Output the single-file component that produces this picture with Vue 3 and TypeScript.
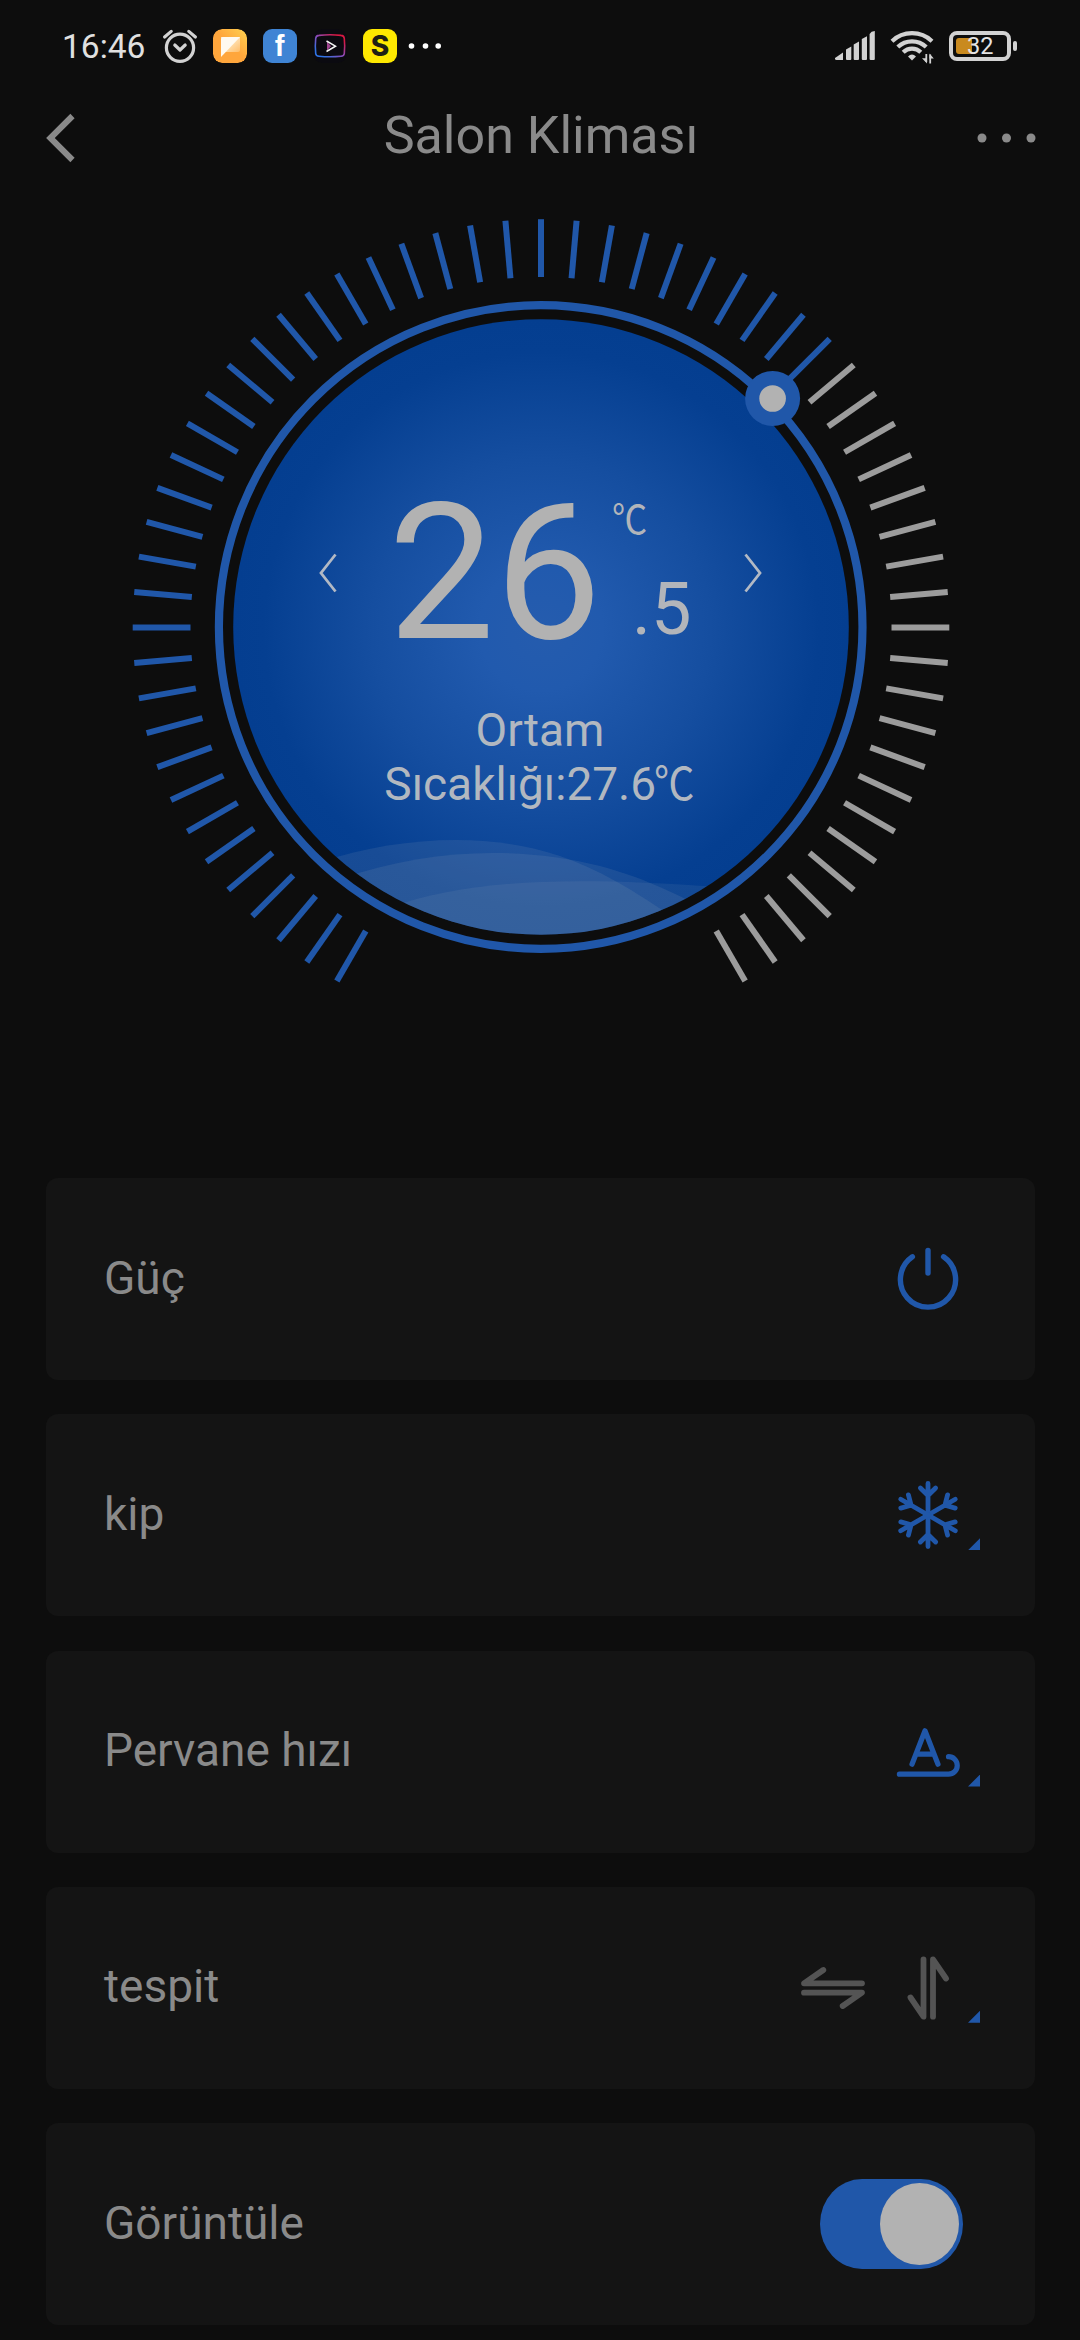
<script setup lang="ts">
import { computed, ref } from 'vue'

interface Tick {
  angle: number
  active: boolean
}

const whole = ref(26)
const fraction = ref(5)
const ambient = ref('27.6')
const knobAngle = 45
const displayOn = ref(true)

const ticks = computed<Tick[]>(() =>
  Array.from({ length: 61 }, (_, i) => {
    const angle = -150 + i * 5
    return { angle, active: angle <= knobAngle }
  }),
)

const arms = [0, 60, 120, 180, 240, 300]

type RowKind = 'power' | 'mode' | 'fan' | 'swing' | 'display'
interface Row {
  kind: RowKind
  label: string
  menu: boolean
}

const rows: Row[] = [
  { kind: 'power', label: 'Güç', menu: false },
  { kind: 'mode', label: 'kip', menu: true },
  { kind: 'fan', label: 'Pervane hızı', menu: true },
  { kind: 'swing', label: 'tespit', menu: true },
  { kind: 'display', label: 'Görüntüle', menu: false },
]
</script>

<template>
  <main class="screen">
    <div class="status">
      <span class="time">16:46</span>
      <svg class="alarm" width="36" height="36" viewBox="0 0 36 36" fill="none" stroke="#d2d2d2" stroke-width="3.2" stroke-linecap="round">
        <circle cx="18" cy="19.7" r="13.6" />
        <path d="M2.6 9 L9.2 3.4 M33.4 9 L26.8 3.4" />
        <path d="M12.8 17 L18 22 L23.2 17" stroke-linejoin="round" />
      </svg>
      <svg class="app" width="34" height="34" viewBox="0 0 34 34">
        <defs>
          <linearGradient id="note" x1="1" y1="0" x2="0.2" y2="0.8">
            <stop offset="0" stop-color="#ffd24f" />
            <stop offset="0.6" stop-color="#ffa63c" />
          </linearGradient>
          <linearGradient id="fold" x1="0" y1="0" x2="1" y2="1">
            <stop offset="0.3" stop-color="#ffecc8" />
            <stop offset="1" stop-color="#ffbd68" />
          </linearGradient>
        </defs>
        <rect width="34" height="34" rx="9" fill="url(#note)" />
        <path d="M8 8 H27 V21 Q27 23 25 23 H12 Z" fill="url(#fold)" />
        <path d="M8 28 V10 Q8 8 10 8 H27 Z" fill="#fffaf0" />
      </svg>
      <span class="app facebook">f</span>
      <svg class="app" width="34" height="34" viewBox="0 0 34 34" fill="none">
        <defs>
          <linearGradient id="neon" x1="0" y1="1" x2="1" y2="0">
            <stop offset="0.15" stop-color="#2f74e6" />
            <stop offset="0.5" stop-color="#8b4bb8" />
            <stop offset="0.85" stop-color="#d81842" />
          </linearGradient>
        </defs>
        <rect width="34" height="34" rx="9" fill="#0b0a10" />
        <path d="M6 6.4 Q17 5.2 28 6.4 Q31 6.6 31.3 9.5 Q32.1 17 31.3 24.5 Q31 27 28 27.3 Q17 28.3 6 27.3 Q3 27 2.7 24.5 Q1.9 17 2.7 9.5 Q3 6.6 6 6.4 Z" stroke="url(#neon)" stroke-width="1.6" />
        <path d="M14 12.5 V21.5 L18 17.3 Z" fill="#a04590" />
        <path d="M13.5 12 L22.5 17.2 L13.5 22.5" stroke="#f4f4f4" stroke-width="1.5" />
      </svg>
      <span class="app sapp">S</span>
      <svg width="34" height="8" viewBox="0 0 34 8" class="more-apps" fill="#fff">
        <circle cx="4.5" cy="4" r="2.8" />
        <circle cx="18.5" cy="4" r="2.8" />
        <circle cx="31.2" cy="4" r="2.8" />
      </svg>

      <svg class="signal" width="41" height="30" viewBox="0 0 41 30" fill="#d2d2d2">
        <path d="M1 27 L9 21.5 V29 H2.5 Q1 29 1 27.5 Z" />
        <path d="M12 18.5 L17.3 15.5 V28 Q17.3 29 16.3 29 H13 Q12 29 12 28 Z" />
        <path d="M19.7 13.5 L25 10.5 V28 Q25 29 24 29 H20.7 Q19.7 29 19.7 28 Z" />
        <path d="M27.8 8 L33 5.2 V28 Q33 29 32 29 H28.8 Q27.8 29 27.8 28 Z" />
        <path d="M35.6 3 L37.6 0.8 L40.8 0 V28 Q40.8 29 39.8 29 H36.6 Q35.6 29 35.6 28 Z" />
      </svg>
      <svg class="wifi" width="44" height="34" viewBox="0 0 44 34" fill="none" stroke="#d2d2d2" stroke-width="4.2">
        <path d="M2 11.2 A29 29 0 0 1 42 11.2" />
        <path d="M7.8 17 A20.5 20.5 0 0 1 36.2 17" />
        <path d="M13.2 22.3 A12.5 12.5 0 0 1 30.8 22.3" />
        <path d="M18 26.5 Q22 22.4 26 26.5 L22 30.5 Z" fill="#d2d2d2" stroke="none" />
        <path d="M36.3 24 V32 M40.2 33.5 V24.5" stroke-width="1.8" />
        <path d="M32 28.2 H37 V33.6 Z M39.5 23.4 L43.8 28.6 H39.5 Z" fill="#d2d2d2" stroke="none" />
      </svg>
      <div class="battery">
        <div class="battery-body">
          <span class="battery-fill"></span>
          <span class="battery-text">32</span>
        </div>
        <span class="battery-cap"></span>
      </div>
    </div>

    <header class="header">
      <svg width="30" height="50" viewBox="0 0 30 50" fill="none" stroke="#8a8a8a" stroke-width="6">
        <path d="M26.5 3 L4.4 25 L26.5 47" />
      </svg>
      <h1>Salon Kliması</h1>
      <svg width="60" height="12" viewBox="0 0 60 12" fill="#8a8a8a">
        <circle cx="6" cy="6" r="4.5" />
        <circle cx="30.500" cy="6" r="4.5" />
        <circle cx="55" cy="6" r="4.5" />
      </svg>
    </header>

    <section class="dial">
      <svg class="dial-art" width="1080" height="994" viewBox="0 184 1080 994">
        <defs>
          <radialGradient id="disc" gradientUnits="userSpaceOnUse" cx="541" cy="629" r="308">
            <stop offset="0" stop-color="#255cae" />
            <stop offset="0.2" stop-color="#215aae" />
            <stop offset="0.55" stop-color="#154ea0" />
            <stop offset="0.9" stop-color="#053f91" />
            <stop offset="1" stop-color="#043e90" />
          </radialGradient>
          <clipPath id="discClip"><circle cx="541" cy="627" r="307.8" /></clipPath>
        </defs>
        <line
          v-for="t in ticks"
          :key="t.angle"
          x1="541"
          y1="219.2"
          x2="541"
          y2="277"
          stroke-width="6"
          :stroke="t.active ? '#2057a9' : '#9c9c9c'"
          :transform="`rotate(${t.angle} 541 627.5)`"
        />
        <circle cx="541" cy="627" r="307.8" fill="url(#disc)" />
        <g clip-path="url(#discClip)" fill="#c8c8c8">
          <path fill-opacity="0.1" d="M320 862 C400 836 490 832 560 856 C600 870 630 888 680 922 V950 H320 Z" />
          <path fill-opacity="0.1" d="M340 879 C430 848 520 846 600 866 C640 877 670 890 710 912 V950 H340 Z" />
          <path fill-opacity="0.08" d="M390 907 C470 880 560 876 720 887 V950 H390 Z" />
        </g>
        <circle cx="540.7" cy="627" r="321.8" fill="none" stroke="#2057a9" stroke-width="8.2" />
        <circle cx="772.6" cy="398.5" r="27.5" fill="#2057a9" />
        <circle cx="772.6" cy="398.5" r="13.3" fill="#b2b2b2" />
      </svg>

      <div class="readout">
        <div class="setpoint">
          <svg width="18" height="40" viewBox="0 0 18 40" fill="none" stroke="#b2b9c4" stroke-width="2.8">
            <path d="M16.5 1.5 L2 20 L16.5 38.5" />
          </svg>
          <span class="whole">{{ whole }}</span>
          <div class="side">
            <span class="unit"><span class="celsius">℃</span></span>
            <span class="fraction">.{{ fraction }}</span>
          </div>
          <svg width="18" height="40" viewBox="0 0 18 40" fill="none" stroke="#b2b9c4" stroke-width="2.8">
            <path d="M1.5 1.5 L16 20 L1.5 38.5" />
          </svg>
        </div>
        <p class="ambient">Ortam<br />Sıcaklığı:{{ ambient }}<span class="celsius">℃</span></p>
      </div>
    </section>

    <section class="list">
      <div v-for="row in rows" :key="row.kind" class="card">
        <span class="label">{{ row.label }}</span>

        <svg v-if="row.kind === 'power'" class="icon" width="70" height="70" viewBox="-35 -35 70 70" stroke="#2057a9" stroke-width="5.4">
          <path d="M-15.6 -22.2 A27.6 27.6 0 1 0 15.6 -22.2" />
          <path d="M0 -28.6 V-6" />
        </svg>

        <svg v-else-if="row.kind === 'mode'" class="icon" width="70" height="70" viewBox="-35 -35 70 70" stroke="#2057a9" stroke-width="4.8">
          <g v-for="a in arms" :key="a" :transform="`rotate(${a})`">
            <path d="M0 0 V-31.5 M-7.6 -27 L0 -19.5 L7.6 -27" />
          </g>
        </svg>

        <svg v-else-if="row.kind === 'fan'" class="icon" width="70" height="70" viewBox="-35 -35 70 70" stroke="#2057a9" stroke-width="5.2">
          <path d="M-16 12.2 L-3 -21.2 L10 12.2 M-11.700 2.2 H5.8" />
          <path d="M-28.600 22.2 H20.5 A8.7 8.7 0 0 0 20.5 4.7" />
        </svg>

        <template v-else-if="row.kind === 'swing'">
          <svg class="icon" width="70" height="70" viewBox="-35 -35 70 70" stroke="#545454" stroke-width="5.8">
            <path d="M29 -4.7 H-29 L-9.7 -18" />
            <path d="M-29 4.7 H29 L9.7 18" />
          </svg>
          <svg class="icon gap" width="70" height="70" viewBox="-35 -35 70 70" stroke="#545454" stroke-width="5.8">
            <path d="M-4.5 -28.7 V28.7 L-17.5 9.5" />
            <path d="M5 28.7 V-28.7 L18 -9.5" />
          </svg>
        </template>

        <div v-else class="toggle" :class="{ on: displayOn }"><span class="knob"></span></div>

        <span v-if="row.menu" class="corner"></span>
      </div>
    </section>
  </main>
</template>

<style>
html,
body {
  background: #0d0d0d;
}
</style>

<style scoped>
.screen {
  width: 1080px;
  height: 2340px;
  overflow: hidden;
  background: #0d0d0d;
  color: #8a8a8a;
  font-family: Roboto, 'Noto Sans CJK SC', sans-serif;
}
svg {
  display: block;
  flex: none;
}
.status {
  display: flex;
  align-items: center;
  box-sizing: border-box;
  height: 92px;
  padding: 0 63px 0 62px;
}
.time {
  width: 100px;
  color: #e0e0e0;
  font-size: 33.5px;
  font-weight: 400;
  line-height: 40px;
  padding-top: 2px;
  box-sizing: border-box;
}
.alarm {
  margin-right: 15px;
}
.app {
  width: 34px;
  height: 34px;
  margin-right: 16px;
  border-radius: 9px;
  text-align: center;
}
.facebook {
  background: #3f84d4;
  color: #fff;
  font: 700 29px/35px 'Liberation Sans', sans-serif;
  text-indent: -1px;
}
.sapp {
  background: #fee800;
  color: #1f1f14;
  font: 800 28px/34px Inter, sans-serif;
  margin-right: 10px;
}
.signal {
  margin-left: auto;
  margin-right: 15px;
}
.wifi {
  margin-top: 2px;
  margin-right: 15px;
}
.battery {
  display: flex;
  align-items: center;
  gap: 2px;
}
.battery-body {
  position: relative;
  box-sizing: border-box;
  width: 62px;
  height: 30px;
  border: 4px solid #d2d2d2;
  border-radius: 8px;
}
.battery-fill {
  display: block;
  width: 16px;
  height: 16px;
  margin: 3px;
  border-radius: 3px 0 0 3px;
  background: #c98a1f;
}
.battery-text {
  position: absolute;
  left: 14px;
  top: -1px;
  color: #e4e4e4;
  font-size: 23.5px;
  line-height: 24px;
}
.battery-cap {
  width: 4px;
  height: 10px;
  border-radius: 2px;
  background: #d2d2d2;
}
.header {
  display: flex;
  align-items: center;
  justify-content: space-between;
  box-sizing: border-box;
  height: 92px;
  padding: 0 44px 0 46px;
}
.header h1 {
  margin: 0 0 5px 30px;
  font-size: 52px;
  font-weight: 400;
  line-height: 60px;
}
.dial {
  position: relative;
  height: 994px;
}
.dial-art {
  position: absolute;
  left: 0;
  top: 0;
}
.readout {
  position: relative;
  display: flex;
  flex-direction: column;
  align-items: center;
  padding-top: 294px;
}
.setpoint {
  display: flex;
  align-items: center;
  width: 443px;
  height: 190px;
  margin-left: 1px;
}
.whole {
  width: 213px;
  margin-left: 51px;
  color: #b2b2b2;
  font-size: 190px;
  line-height: 190px;
}
.side {
  display: flex;
  flex: 1;
  flex-direction: column;
  color: #b2b5ba;
}
.unit {
  padding-left: 13px;
  font-size: 40px;
  line-height: 72px;
}
.celsius {
  display: inline-block;
  margin: 0 -0.1em 0 -0.04em;
  transform: scaleX(0.88);
  transform-origin: 0 50%;
}
.fraction {
  padding-left: 31px;
  font-size: 72px;
  line-height: 105px;
}
.ambient {
  margin: 35px 0 0;
  color: #b2b8c0;
  font-size: 46px;
  line-height: 54px;
  text-align: center;
}
.list {
  display: flex;
  flex-direction: column;
  gap: 34.25px;
  padding: 0 45px 0 46px;
}
.card {
  position: relative;
  display: flex;
  align-items: center;
  box-sizing: border-box;
  height: 202px;
  padding: 0 72px 0 58px;
  border-radius: 12px;
  background: #141414;
}
.label {
  flex: 1;
  padding-bottom: 3px;
  font-size: 46px;
  line-height: 54px;
}
.icon {
  fill: none;
  stroke-linecap: round;
  stroke-linejoin: round;
}
.gap {
  margin-left: 25px;
}
.toggle {
  display: flex;
  align-items: center;
  box-sizing: border-box;
  width: 143px;
  height: 90px;
  padding: 0 4px;
  border-radius: 42px / 45px;
  background: #3a3a3a;
}
.toggle.on {
  justify-content: flex-end;
  background: #2057a9;
}
.knob {
  width: 79px;
  height: 82px;
  border-radius: 50%;
  background: #b2b2b2;
}
.corner {
  position: absolute;
  right: 55px;
  bottom: 66px;
  width: 12px;
  height: 12px;
  background: #2057a9;
  clip-path: polygon(100% 0, 100% 100%, 0 100%);
}
</style>
